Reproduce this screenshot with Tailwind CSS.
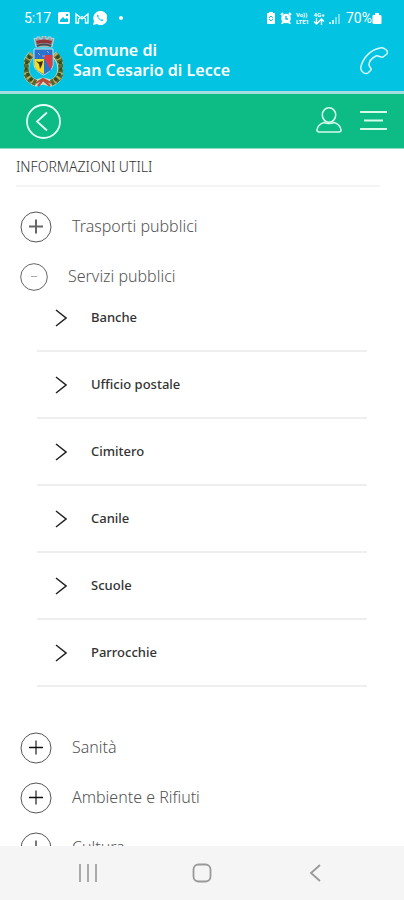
<!DOCTYPE html>
<html lang="it">
<head>
<meta charset="utf-8">
<meta name="viewport" content="width=device-width, initial-scale=1">
<title>Comune di San Cesario di Lecce</title>
<script src="https://cdn.jsdelivr.net/npm/@tailwindcss/browser@4"></script>
</head>
<body class="flex h-screen flex-col overflow-hidden bg-white font-['Noto_Sans','Open_Sans',sans-serif] text-[#555]">
<header class="shrink-0 text-white">
  <div class="bg-[#02c4e2]">
    <div class="flex h-9 items-center justify-between pl-6 pr-[22px]">
      <div class="flex items-center gap-1">
        <span class="mr-0.5 font-[Roboto] text-sm">5:17</span>
        <svg class="h-3.5 w-3.5" viewBox="0 0 14 14" fill="none"><rect x="1" y="1" width="12" height="12" rx="2" fill="#fff"/><path d="M3 11V9l3-3 2 2 2-1 1 1v3zM9 3h2v2H9z" fill="#02c4e2"/></svg>
        <svg class="h-3.5 w-3.5" viewBox="0 0 14 14" fill="none" stroke="#fff" stroke-width="1.3"><path d="M1 12V3l6 5 6-5v9h-2.500V8L7 5.500 3.500 8v4z"/></svg>
        <svg class="h-3.5 w-3.5" viewBox="0 0 14 14"><path d="M7 0a7 7 0 1 1-3 13L0 14l1-4A7 7 0 0 1 7 0z" fill="#fff"/><path d="M4.500 3.500c-2 2 3.500 8 6 6L9 8 8 9 5 6l1-1z" fill="#02c4e2"/></svg>
        <span class="ml-2 h-1 w-1 rounded-full bg-white"></span>
      </div>
      <div class="flex items-center gap-1">
        <svg class="h-3 w-[10px]" viewBox="0 0 10 12"><path d="M3 0h4v1h1q1 0 1 1v9q0 1-1 1H2q-1 0-1-1V2q0-1 1-1h1z" fill="#fff"/><path d="M3 6l2-2 2 2M3 7l2 2 2-2" fill="none" stroke="#02c4e2"/></svg>
        <svg class="h-3 w-3" viewBox="0 0 12 12"><path d="M1 3l2-2M9 1l2 2M3 10l-1 2M9 10l1 2" stroke="#fff" stroke-width="2"/><circle cx="6" cy="6.500" r="4.800" fill="#fff"/><path d="M6 4v3h2" fill="none" stroke="#02c4e2" stroke-width="1.300"/></svg>
        <span class="flex flex-col font-[Roboto] text-[6px] font-bold leading-[7px]"><span>Vo))</span><span>LTE1</span></span>
        <span class="flex flex-col items-center font-[Roboto] text-[6px] font-bold leading-[7px]"><span>4G+</span><svg class="h-[7px] w-3" viewBox="0 0 12 7" fill="none" stroke="#fff" stroke-width="1.300"><path d="M3.500 0v6M1 3.500L3.500 6 6 3.500M8.500 7V1M6 3.500L8.500 1 11 3.500"/></svg></span>
        <svg class="h-3 w-[11px]" viewBox="0 0 11 12" stroke="#fff" stroke-width="1.500"><path d="M1 12v-2M4 12V8"/><path d="M7 12V5M10 12V2" opacity=".6"/></svg>
        <span class="flex items-center pl-0.5 font-[Roboto] text-sm">70%<svg class="h-3 w-[10px]" viewBox="0 0 10 12"><path d="M3 1h4v2h1q1.500 0 1.500 1v7q0 1-1 1H1.500q-1 0-1-1V4q0-1 1-1H3z" fill="#fff"/></svg></span>
      </div>
    </div>
    <div class="flex h-[55px] items-start pl-6 pr-4">
      <svg class="h-[52px] w-[39px]" viewBox="0 0 39 52" role="img" aria-label="Stemma comunale">
        <path d="M8 18C-1 27-1 42 12 47l7-2 8 2c13-5 12-21 3-29" fill="none" stroke="#c9dccb" stroke-width="7"/>
        <path d="M8 18C-1 27-1 42 12 47M31 18c9 9 9 24-4 29" fill="none" stroke="#54672d" stroke-width="6"/>
        <path d="M8 18C-1 27-1 42 12 47M31 18c9 9 9 24-4 29" fill="none" stroke="#b7ae62" stroke-width="5" stroke-dasharray="2 3"/>
        <path d="M6 20C0 28 1 38 9 45M33 20c6 8 5 18-3 25" fill="none" stroke="#314c22" stroke-width="3" stroke-dasharray="3 3"/>
        <path d="M12 47l7-4 8 4M14 50l5-6 7 6" fill="none" stroke="#b84a38" stroke-width="2"/>
        <path d="M10 13h19v15c0 5-4 8-9.500 11C14 36 10 33 10 28z" fill="#2c72cc" stroke="#d4e2e6"/>
        <path d="M10.500 23H20v15c-5-2-9.500-5-9.500-10z" fill="#f5dc27"/><path d="M20 19h8.500v9c0 5-4 7-8.500 10z" fill="#d83c48"/><path d="M20 22l7 12-7 4z" fill="#2875c9"/>
        <path d="M12 25l3 1 4-1-1 4-2 4-1-5z" fill="#392f20"/><path d="M14 17l2 2M23 15l2 2M18 20h3" stroke="#8bb6de"/>
        <path d="M10 2l3 1V1h3v2h2V0h4v3h2V1h3v2l3-1-2 9H12z" fill="#929b9d" stroke="#e0e5e5" stroke-width=".7"/>
        <path d="M12 5q8-3 16 0l-1 3q-7-2-14 0z" fill="#93333a"/><path d="M13 10q7-3 14 0" fill="none" stroke="#444e51" stroke-width="2"/>
      </svg>
      <h1 class="ml-[10px] mt-1 flex-1 text-base font-semibold leading-5">Comune di<br>San Cesario di Lecce</h1>
      <a href="tel:" aria-label="Telefona" class="mt-[11px]"><svg class="h-7 w-7" viewBox="0 0 28 28" fill="none" stroke="#d8fbff" stroke-width="1.500" stroke-linejoin="round"><path d="M8 26C5 28 0 24 0.800 20C3 11 10 3 20 1C24 0 29 4 27 7L23 10C21 11 18 8 16 9C12 11 9 14 9 18C9 20 12 21 11 23Z"/></svg></a>
    </div>
    <div class="h-[3px] bg-[#a2dde0]"></div>
  </div>
  <div class="flex h-[55px] items-center border-b border-[#8adfc3] bg-[#0dbb84] pl-[26px] pr-[17px]">
    <button type="button" aria-label="Indietro"><svg class="h-[35px] w-[35px]" viewBox="0 0 35 35" fill="none" stroke="#e2fff5" stroke-width="1.800"><circle cx="17.500" cy="17.500" r="16.500"/><path d="M21 8.500L11 17.500l10 9"/></svg></button>
    <button type="button" aria-label="Profilo" class="ml-auto"><svg class="h-7 w-[26px]" viewBox="0 0 26 28" fill="none" stroke="#d5fbeb" stroke-width="1.600"><ellipse cx="13" cy="8" rx="6.700" ry="7.200"/><path d="M8 15.500C4 16.500 1 20 1 23q0 2 2 2h20q2 0 2-2c0-3-3-6.500-7-7.500q-5 2-10 0z"/></svg></button>
    <button type="button" aria-label="Menu" class="ml-[18px]"><svg class="h-5 w-[27px]" viewBox="0 0 27 20" stroke="#d5fbeb" stroke-width="2"><path d="M0 1h27M4 9.500h19M0 18h27"/></svg></button>
  </div>
</header>
<main class="min-h-0 flex-1 overflow-hidden">
  <h2 class="ml-4 mr-6 mb-[15px] flex h-[38px] items-center border-b-2 border-[#f4f4f4] text-sm font-light text-[#333]">INFORMAZIONI UTILI</h2>
  <button type="button" class="flex h-[50px] w-full items-center gap-5 pl-5 text-left text-base font-light"><svg class="h-8 w-8" viewBox="0 0 32 32" fill="none" stroke="#555"><circle cx="16" cy="16" r="15"/><path d="M9 15.500h14M16 8.500v14" stroke="#666" stroke-width="2"/></svg><span class="pb-0.5">Trasporti pubblici</span></button>
  <button type="button" aria-expanded="true" class="flex h-[50px] w-full items-center gap-5 pl-5 text-left text-base font-light"><svg class="h-7 w-7" viewBox="0 0 28 28" fill="none" stroke="#666"><circle cx="14" cy="14" r="13.300"/><path d="M11 13.500h6" stroke="#aaa"/></svg><span class="pb-0.5">Servizi pubblici</span></button>
  <ul class="relative -mt-[17px] mb-9 ml-[37px] mr-[37px] text-[13px] font-medium text-[#333]">
    <li class="border-b-2 border-[#eee]"><a href="#banche" class="flex h-[65px] items-center gap-6 pl-[18px]"><svg class="h-[18px] w-3" viewBox="0 0 12 18" fill="none" stroke="#222" stroke-width="1.500"><path d="M1 1l10 8-10 8"/></svg>Banche</a></li>
    <li class="border-b-2 border-[#eee]"><a href="#posta" class="flex h-[65px] items-center gap-6 pl-[18px]"><svg class="h-[18px] w-3" viewBox="0 0 12 18" fill="none" stroke="#222" stroke-width="1.500"><path d="M1 1l10 8-10 8"/></svg>Ufficio postale</a></li>
    <li class="border-b-2 border-[#eee]"><a href="#cimitero" class="flex h-[65px] items-center gap-6 pl-[18px]"><svg class="h-[18px] w-3" viewBox="0 0 12 18" fill="none" stroke="#222" stroke-width="1.500"><path d="M1 1l10 8-10 8"/></svg>Cimitero</a></li>
    <li class="border-b-2 border-[#eee]"><a href="#canile" class="flex h-[65px] items-center gap-6 pl-[18px]"><svg class="h-[18px] w-3" viewBox="0 0 12 18" fill="none" stroke="#222" stroke-width="1.500"><path d="M1 1l10 8-10 8"/></svg>Canile</a></li>
    <li class="border-b-2 border-[#eee]"><a href="#scuole" class="flex h-[65px] items-center gap-6 pl-[18px]"><svg class="h-[18px] w-3" viewBox="0 0 12 18" fill="none" stroke="#222" stroke-width="1.500"><path d="M1 1l10 8-10 8"/></svg>Scuole</a></li>
    <li class="border-b-2 border-[#eee]"><a href="#parrocchie" class="flex h-[65px] items-center gap-6 pl-[18px]"><svg class="h-[18px] w-3" viewBox="0 0 12 18" fill="none" stroke="#222" stroke-width="1.500"><path d="M1 1l10 8-10 8"/></svg>Parrocchie</a></li>
  </ul>
  <button type="button" class="flex h-[50px] w-full items-center gap-5 pl-5 text-left text-base font-light"><svg class="h-8 w-8" viewBox="0 0 32 32" fill="none" stroke="#555"><circle cx="16" cy="16" r="15"/><path d="M16 8.500v14" stroke="#777" stroke-width="2"/><path d="M9 15.500h14" stroke="#111" stroke-width="1.500"/></svg><span class="pb-0.5">Sanità</span></button>
  <button type="button" class="flex h-[50px] w-full items-center gap-5 pl-5 text-left text-base font-light"><svg class="h-8 w-8" viewBox="0 0 32 32" fill="none" stroke="#555"><circle cx="16" cy="16" r="15"/><path d="M16 8.500v14" stroke="#777" stroke-width="2"/><path d="M9 15.500h14" stroke="#111" stroke-width="1.500"/></svg><span class="pb-0.5">Ambiente e Rifiuti</span></button>
  <button type="button" class="flex h-[50px] w-full items-center gap-5 pl-5 text-left text-base font-light"><svg class="h-8 w-8" viewBox="0 0 32 32" fill="none" stroke="#555"><circle cx="16" cy="16" r="15"/><path d="M16 8.500v14" stroke="#777" stroke-width="2"/><path d="M9 15.500h14" stroke="#111" stroke-width="1.500"/></svg><span class="pb-0.5">Cultura</span></button>
</main>
<nav class="flex h-[54px] shrink-0 items-center justify-center gap-[94px] bg-[#f5f5f5]" aria-label="Navigazione di sistema">
  <button type="button" aria-label="Recenti"><svg class="h-[18px] w-5" viewBox="0 0 20 18" stroke="#aaa" stroke-width="2"><path d="M2 0v18M10 0v18M18 0v18"/></svg></button>
  <button type="button" aria-label="Home"><svg class="h-5 w-5" viewBox="0 0 20 20" fill="none" stroke="#999" stroke-width="1.800"><rect x="1.500" y="1.500" width="17" height="17" rx="5"/></svg></button>
  <button type="button" aria-label="Indietro"><svg class="h-[18px] w-5" viewBox="0 0 20 18" fill="none" stroke="#999" stroke-width="1.800"><path d="M14 1L5 9l9 8"/></svg></button>
</nav>
</body>
</html>
